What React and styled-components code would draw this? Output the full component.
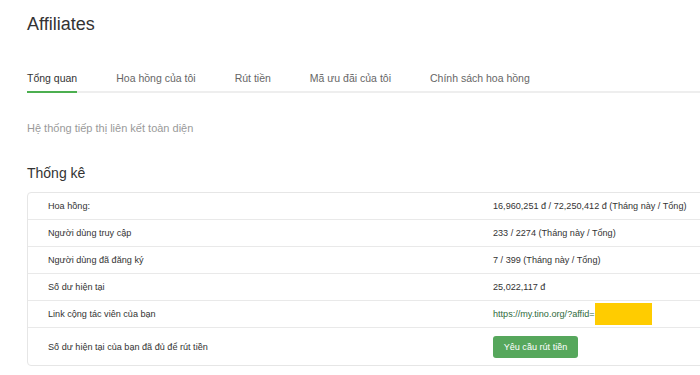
import React from "react";
import styled, { createGlobalStyle } from "styled-components";

const GlobalStyle = createGlobalStyle`
  html, body {
    margin: 0;
    padding: 0;
    background: #fff;
    overflow: hidden;
  }
  body {
    font-family: "Liberation Sans", Arial, sans-serif;
    color: #333;
  }
`;

const Page = styled.div`
  padding: 12px 0 0 27px;
  width: 760px;
`;

const Title = styled.h1`
  margin: 0;
  font-size: 18px;
  line-height: 24px;
  font-weight: 400;
  color: #333;
`;

const TabBar = styled.div`
  display: flex;
  gap: 39px;
  margin-top: 26px;
  border-bottom: 2px solid #eeeeee;
  width: 673px;
`;

const Tab = styled.div`
  font-size: 10.5px;
  line-height: 13px;
  padding: 10px 0 6px;
  margin-bottom: -2px;
  color: ${(p) => (p.$active ? "#333" : "#666")};
  border-bottom: 2px solid ${(p) => (p.$active ? "#4caf50" : "transparent")};
`;

const Subtitle = styled.p`
  margin: 28px 0 0;
  font-size: 11px;
  line-height: 14px;
  color: #9a9a9a;
`;

const SectionTitle = styled.h2`
  margin: 29px 0 0;
  font-size: 14px;
  line-height: 18px;
  font-weight: 400;
  color: #333;
`;

const Table = styled.div`
  margin-top: 10px;
  border: 1px solid #e6e6e6;
  border-radius: 4px;
  width: 720px;
`;

const Row = styled.div`
  display: grid;
  grid-template-columns: 465px 1fr;
  align-items: center;
  height: ${(p) => (p.$tall ? "37px" : "26px")};
  font-size: 9.1px;
  color: #333;
  & + & {
    border-top: 1px solid #e9e9e9;
  }
`;

const Label = styled.div`
  padding-left: 20px;
`;

const Value = styled.div`
  display: flex;
  align-items: center;
`;

const Link = styled.a`
  color: #2f6b3c;
  text-decoration: none;
`;

const Masked = styled.span`
  display: inline-block;
  width: 57px;
  height: 22px;
  background: #ffcc00;
`;

const Button = styled.button`
  font-family: inherit;
  font-size: 9.1px;
  color: #fff;
  background: #56a75c;
  border: none;
  border-radius: 3px;
  width: 85px;
  height: 22px;
  padding: 0;
`;

const tabs = [
  "Tổng quan",
  "Hoa hồng của tôi",
  "Rút tiền",
  "Mã ưu đãi của tôi",
  "Chính sách hoa hồng",
];

const stats = [
  ["Hoa hồng:", "16,960,251 đ / 72,250,412 đ (Tháng này / Tổng)"],
  ["Người dùng truy cập", "233 / 2274 (Tháng này / Tổng)"],
  ["Người dùng đã đăng ký", "7 / 399 (Tháng này / Tổng)"],
  ["Số dư hiện tại", "25,022,117 đ"],
];

export default function App() {
  return (
    <>
      <GlobalStyle />
      <Page>
        <Title>Affiliates</Title>
        <TabBar>
          {tabs.map((t, i) => (
            <Tab key={t} $active={i === 0}>
              {t}
            </Tab>
          ))}
        </TabBar>
        <Subtitle>Hệ thống tiếp thị liên kết toàn diện</Subtitle>
        <SectionTitle>Thống kê</SectionTitle>
        <Table>
          {stats.map(([label, value]) => (
            <Row key={label}>
              <Label>{label}</Label>
              <Value>{value}</Value>
            </Row>
          ))}
          <Row>
            <Label>Link cộng tác viên của bạn</Label>
            <Value>
              <Link href="#">https://my.tino.org/?affid=</Link>
              <Masked />
            </Value>
          </Row>
          <Row $tall>
            <Label>Số dư hiện tại của bạn đã đủ để rút tiền</Label>
            <Value>
              <Button>Yêu cầu rút tiền</Button>
            </Value>
          </Row>
        </Table>
      </Page>
    </>
  );
}
